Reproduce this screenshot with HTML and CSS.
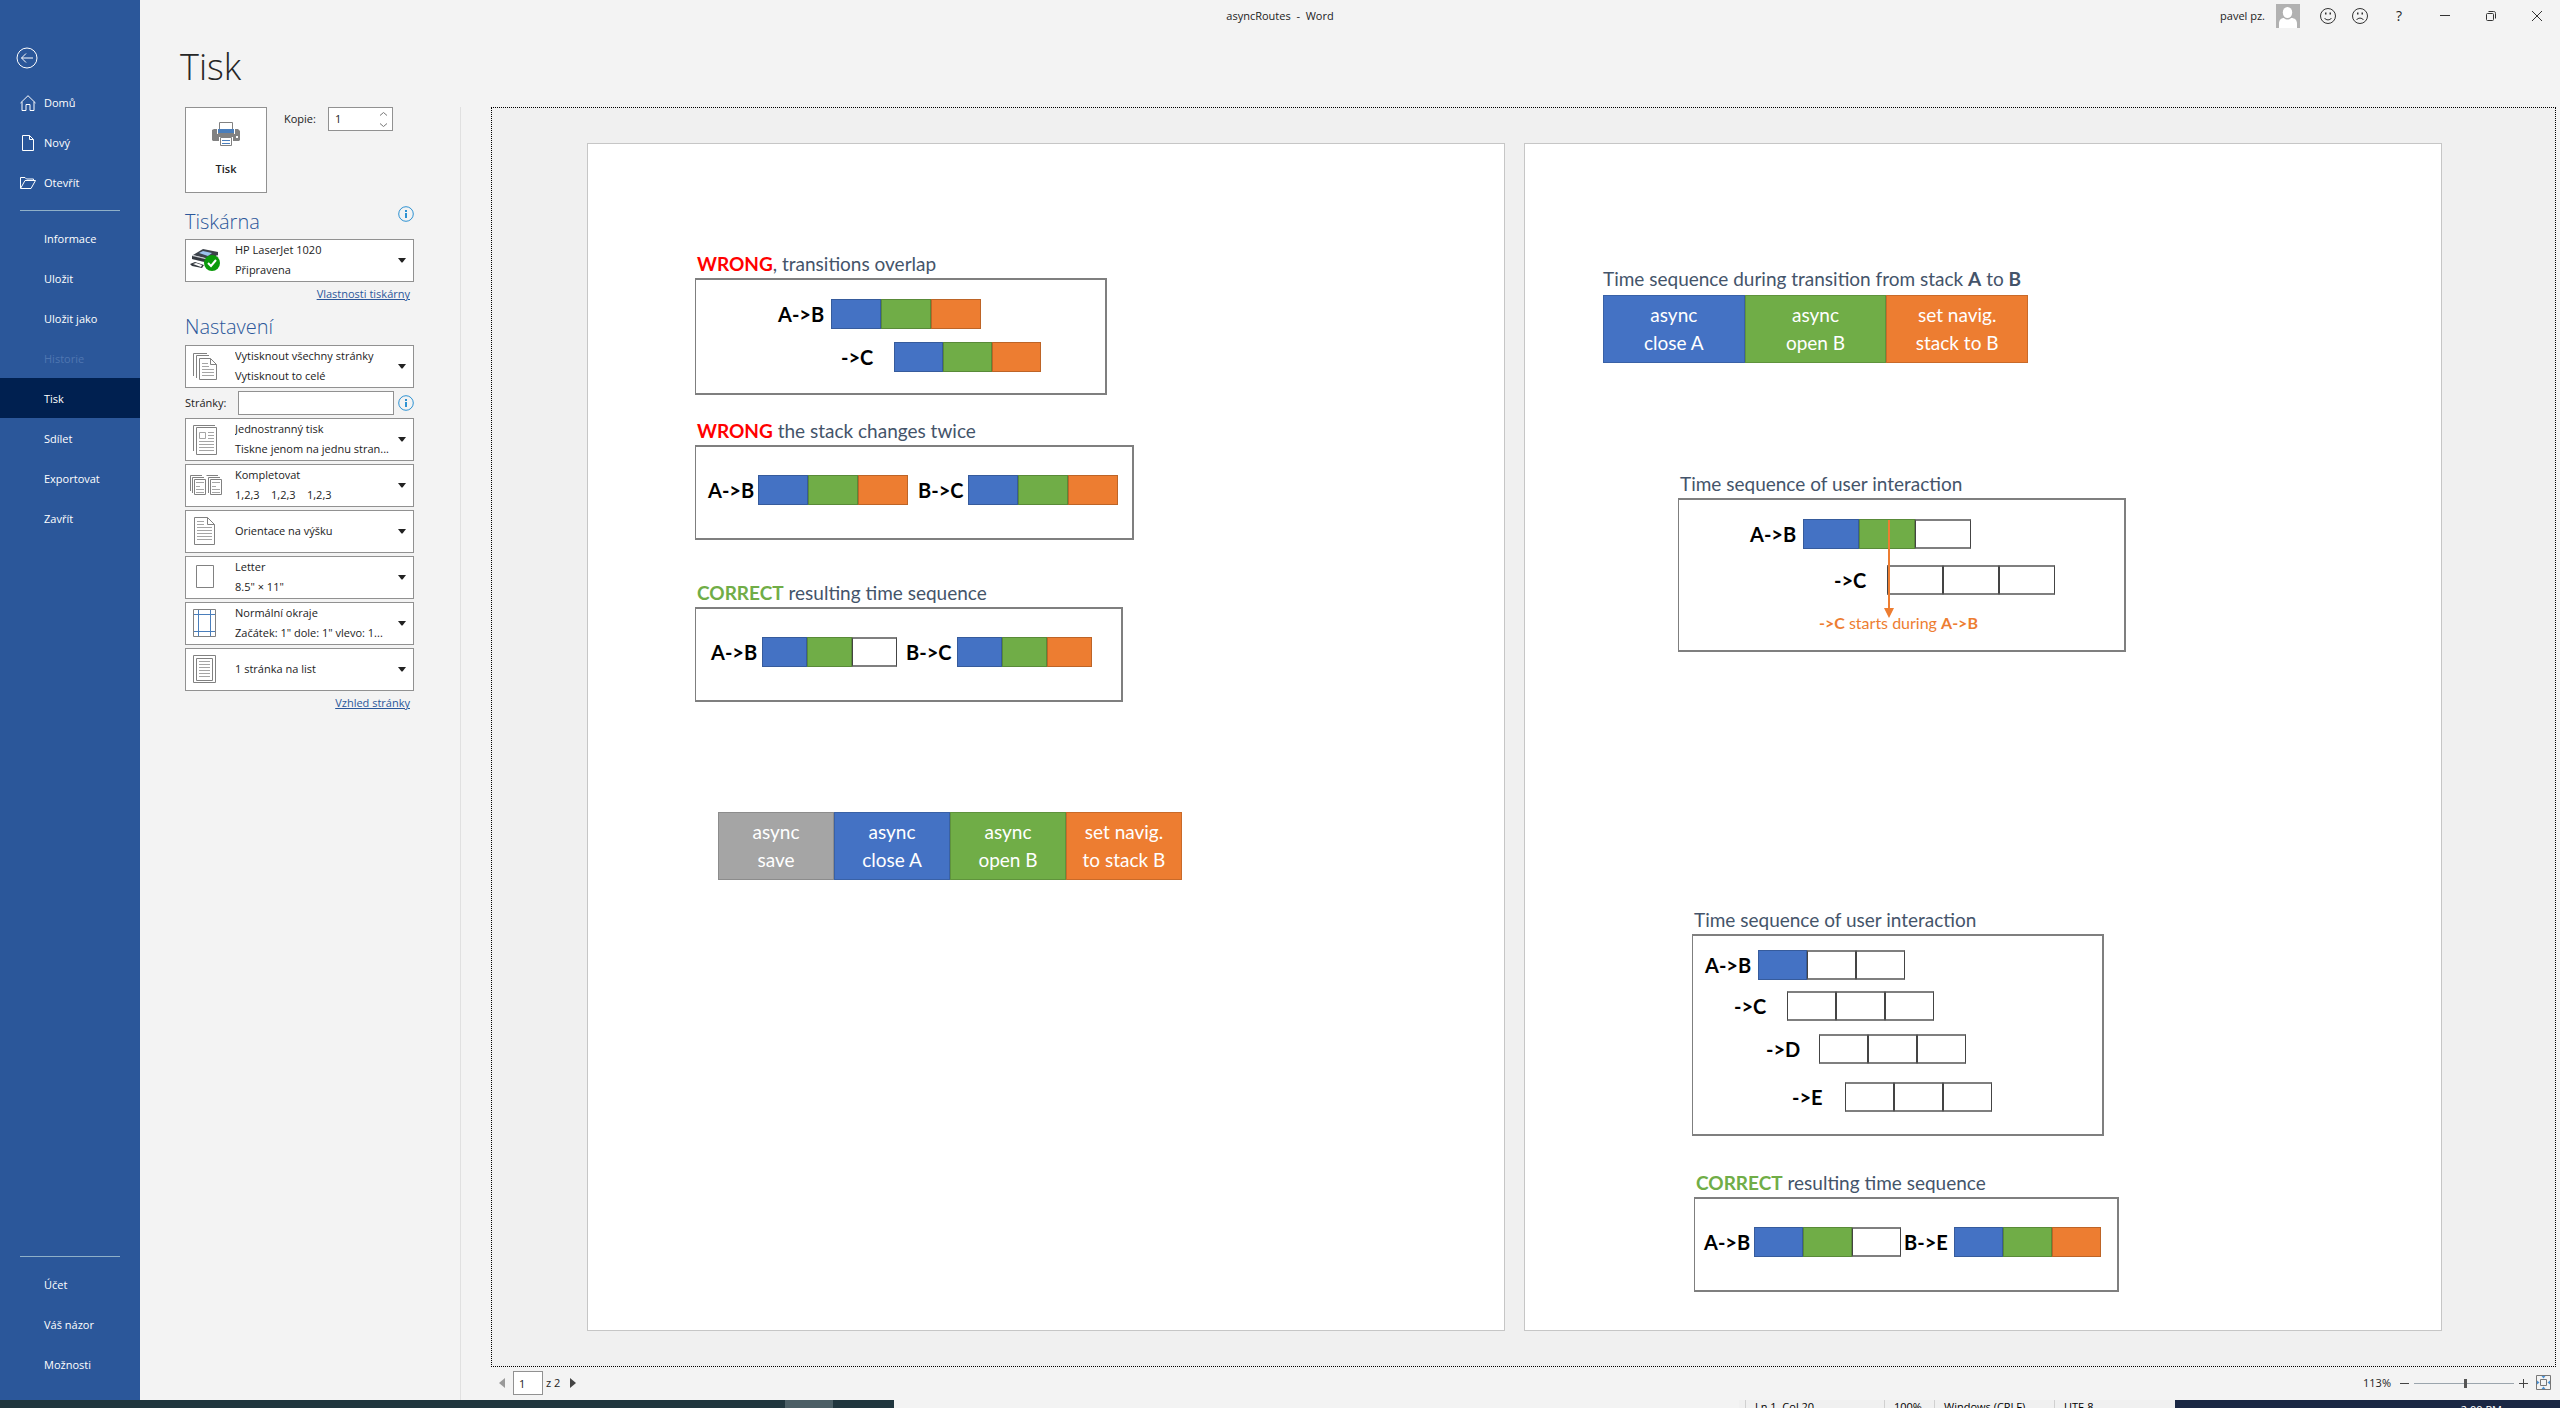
FILE: index.html
```
<!DOCTYPE html>
<html lang="cs">
<head>
<meta charset="utf-8">
<title>asyncRoutes - Word</title>
<link rel="stylesheet" href="styles.css">
</head>
<body>
<div class="app">
  <nav class="sidebar" aria-label="Soubor">
    <button class="back" aria-label="Zpět">
      <svg width="22" height="22" viewBox="0 0 22 22"><circle cx="11" cy="11" r="10"/><path d="M17 11H5.500M10 6.500L5.500 11l4.500 4.500"/></svg>
    </button>
    <a class="nav-item" href="#"><svg width="16" height="16" viewBox="0 0 16 16"><path d="M.5 8L8 .7 15.500 8M2 6.800V15.500h4V9.500h4v6h4V6.800"/></svg>Domů</a>
    <a class="nav-item" href="#"><svg width="16" height="16" viewBox="0 0 16 16"><path d="M2.500.5h7l4 4v11h-11zM9.500.5v4h4"/></svg>Nový</a>
    <a class="nav-item" href="#"><svg width="16" height="16" viewBox="0 0 16 16"><path d="M.5 13V2.500h4.500l1.500 1.500h7v1.500M.5 13.500h10.500l4.500-8H5z"/></svg>Otevřít</a>
    <hr class="nav-line">
    <a class="nav-item" href="#">Informace</a>
    <a class="nav-item" href="#">Uložit</a>
    <a class="nav-item" href="#">Uložit jako</a>
    <a class="nav-item disabled" aria-disabled="true">Historie</a>
    <a class="nav-item current" href="#" aria-current="page">Tisk</a>
    <a class="nav-item" href="#">Sdílet</a>
    <a class="nav-item" href="#">Exportovat</a>
    <a class="nav-item" href="#">Zavřít</a>
    <div class="nav-space"></div>
    <hr class="nav-line">
    <a class="nav-item" href="#">Účet</a>
    <a class="nav-item" href="#">Váš názor</a>
    <a class="nav-item" href="#">Možnosti</a>
  </nav>

  <div class="main">
    <header class="titlebar">
      <div class="doc-title">asyncRoutes&nbsp; -&nbsp; Word</div>
      <div class="account">
        <span>pavel pz.</span>
        <svg class="avatar" width="24" height="24" viewBox="0 0 24 24"><path fill="#b1b1b1" d="M0 0h24v24H0z"/><ellipse cx="11.500" cy="8.500" rx="4.700" ry="5.500" fill="#fff"/><path fill="#fff" d="M3 24v-4c0-4 2-6 5-6 2 2 5 2 7 0 4 0 6 2 6 6v4z"/></svg>
      </div>
      <button class="tool" aria-label="Líbí se mi"><svg width="18" height="18" viewBox="0 0 18 18"><circle cx="9" cy="9" r="7.500"/><path d="M5.500 11c1.500 2.500 5.500 2.500 7 0"/><path class="eye" d="M6 5.500h1.500v2H6zM10.500 5.500H12v2h-1.500z"/></svg></button>
      <button class="tool" aria-label="Nelíbí se mi"><svg width="18" height="18" viewBox="0 0 18 18"><circle cx="9" cy="9" r="7.500"/><path d="M5.500 13c1.500-2.500 5.500-2.500 7 0"/><path class="eye" d="M6 5.500h1.500v2H6zM10.500 5.500H12v2h-1.500z"/></svg></button>
      <button class="tool wide" aria-label="Nápověda">?</button>
      <button class="tool window" aria-label="Minimalizovat"><svg width="12" height="12" viewBox="0 0 12 12"><path d="M1 5.500h10"/></svg></button>
      <button class="tool window" aria-label="Obnovit"><svg width="12" height="12" viewBox="0 0 12 12"><rect x="1.500" y="3.500" width="7" height="7" rx="1"/><path d="M3.500 1.500h5c1.500 0 2 .5 2 2v5"/></svg></button>
      <button class="tool window" aria-label="Zavřít"><svg width="12" height="12" viewBox="0 0 12 12"><path d="M1 1l10 10M11 1L1 11"/></svg></button>
    </header>

    <h1>Tisk</h1>

    <div class="workspace">
      <section class="settings">
        <div class="print-row">
          <button class="print-button">
            <svg width="28" height="26" viewBox="0 0 28 26"><path fill="#818181" d="M2 8h24l2 2v9l-1 1H1l-1-1V9z"/><path fill="#fff" stroke="#818181" d="M7.500 1.500h13v8h-13z"/><path fill="#fff" d="M5 8h1v5h16V8h1v5H5z"/><path fill="#4a7ebb" d="M6 8h16v4H6z"/><path fill="#fff" d="M8 2h12v6H8z"/><path fill="#fff" d="M24 15h2v2h-2zM7 16h14v4H7z"/><path fill="#fff" stroke="#818181" d="M8.500 16.500h11v8h-11z"/><path stroke="#4a7ebb" d="M10 19.500h8M10 22.500h8"/></svg>
            Tisk
          </button>
          <label for="copies">Kopie:</label>
          <div class="spin">
            <input id="copies" type="text" inputmode="numeric" value="1">
            <svg width="9" height="17" viewBox="0 0 9 17"><path d="M1 4.500l3.500-3 3.500 3M1 12.500l3.500 3 3.500-3"/></svg>
          </div>
        </div>

        <div class="heading-row">
          <h2>Tiskárna</h2>
          <button class="info" aria-label="Stav tiskárny"><svg width="16" height="16" viewBox="0 0 16 16"><circle cx="8" cy="8" r="7.300"/><path d="M7 4h2v2H7zM7 7h2v5H7z"/></svg></button>
        </div>
        <label class="combo">
          <svg class="pic" width="32" height="32" viewBox="0 0 32 32"><path fill="#3d434b" d="M4 11l10-6 15 3v3l-9 4z"/><path fill="#9cc3ee" d="M10 9l4-2 9 2-4 3z"/><path fill="#c5c9ce" d="M3 11l17 4 9-4v6l-7 7-6-2 2-3-15-4z"/><path fill="#33383e" d="M3 12l17 4v3L3 15zM1 20l5-2 9 3-2 3-10-2z"/><path fill="#fff" d="M4 20l3-1 6 2-1 2z"/><circle cx="23" cy="19" r="8" fill="#0a9a0a"/><path fill="none" stroke="#fff" stroke-width="2" d="M19 19l3 3 5-6"/></svg>
          <select aria-label="Tiskárna"><option>HP LaserJet 1020</option></select>
          <span class="detail">Připravena</span>
          <svg class="arrow" width="8" height="5" viewBox="0 0 8 5"><path d="M0 0h8L4.500 4.500h-1z"/></svg>
        </label>
        <a class="more" href="#">Vlastnosti tiskárny</a>

        <div class="heading-row settings-title"><h2>Nastavení</h2></div>
        <div class="options">
          <label class="combo">
            <svg class="pic line" width="32" height="32" viewBox="0 0 32 32"><path d="M4.500 26V3.500H18M7.500 28V5.500H20M10.500 8.500h11l6 6v15h-17zM21.500 8.500v6h6"/><path class="text" d="M13 13.500h6M13 16.500h7M13 19.500h12M13 22.500h12M13 25.500h12"/></svg>
            <select aria-label="Rozsah tisku"><option>Vytisknout všechny stránky</option></select>
            <span class="detail">Vytisknout to celé</span>
            <svg class="arrow" width="8" height="5" viewBox="0 0 8 5"><path d="M0 0h8L4.500 4.500h-1z"/></svg>
          </label>
          <div class="pages-row">
            <label for="pages">Stránky:</label>
            <input id="pages" type="text">
            <button class="info" aria-label="Nápověda ke stránkám"><svg width="16" height="16" viewBox="0 0 16 16"><circle cx="8" cy="8" r="7.300"/><path d="M7 4h2v2H7zM7 7h2v5H7z"/></svg></button>
          </div>
          <label class="combo">
            <svg class="pic line" width="32" height="32" viewBox="0 0 32 32"><path d="M4.500 28V2.500H26M7.500 4.500h20v27h-20z"/><path d="M10.500 9.500h6v6h-6z" class="text"/><path class="text" d="M19 9.500h6M19 12.500h6M19 15.500h6M10 18.500h15M10 21.500h15M10 24.500h15M10 27.500h15"/></svg>
            <select aria-label="Strany tisku"><option>Jednostranný tisk</option></select>
            <span class="detail">Tiskne jenom na jednu stran...</span>
            <svg class="arrow" width="8" height="5" viewBox="0 0 8 5"><path d="M0 0h8L4.500 4.500h-1z"/></svg>
          </label>
          <label class="combo">
            <svg class="pic line" width="34" height="32" viewBox="0 0 34 32"><path d="M1.500 22V6.500H13M3.500 24V8.500H15M5.500 10.500h11v15h-11zM17.500 6.500H29M19.500 24V8.500H31M21.500 10.500h11v15h-11z"/><path class="text" d="M7 13.500h8M7 17.500h4M7 20.500h8M7 23.500h8M23 13.500h8M23 17.500h4M23 20.500h8M23 23.500h8"/></svg>
            <select aria-label="Kompletace"><option>Kompletovat</option></select>
            <span class="detail">1,2,3&nbsp; &nbsp; 1,2,3&nbsp; &nbsp; 1,2,3</span>
            <svg class="arrow" width="8" height="5" viewBox="0 0 8 5"><path d="M0 0h8L4.500 4.500h-1z"/></svg>
          </label>
          <label class="combo single">
            <svg class="pic line" width="32" height="32" viewBox="0 0 32 32"><path d="M5.500 2.500h13l7 7v20h-20zM18.500 2.500v7h7"/><path class="text" d="M8 6.500h7M8 9.500h7M8 12.500h15M8 15.500h15M8 18.500h15M8 21.500h15M8 24.500h15"/></svg>
            <select aria-label="Orientace"><option>Orientace na výšku</option></select>
            <svg class="arrow" width="8" height="5" viewBox="0 0 8 5"><path d="M0 0h8L4.500 4.500h-1z"/></svg>
          </label>
          <label class="combo">
            <svg class="pic line" width="32" height="32" viewBox="0 0 32 32"><path d="M7.500 4.500h17v22h-17z"/></svg>
            <select aria-label="Formát papíru"><option>Letter</option></select>
            <span class="detail">8.5" × 11"</span>
            <svg class="arrow" width="8" height="5" viewBox="0 0 8 5"><path d="M0 0h8L4.500 4.500h-1z"/></svg>
          </label>
          <label class="combo">
            <svg class="pic line" width="32" height="32" viewBox="0 0 32 32"><path d="M4.500 2.500h22v27h-22z"/><path class="guide" d="M9.500 3v26M21.500 3v26M5 7.500h21M5 24.500h21"/></svg>
            <select aria-label="Okraje"><option>Normální okraje</option></select>
            <span class="detail">Začátek: 1" dole: 1" vlevo: 1...</span>
            <svg class="arrow" width="8" height="5" viewBox="0 0 8 5"><path d="M0 0h8L4.500 4.500h-1z"/></svg>
          </label>
          <label class="combo single">
            <svg class="pic line" width="32" height="32" viewBox="0 0 32 32"><path d="M4.500 2.500h22v27h-22zM7.500 5.500h16v22h-16z"/><path class="text" d="M10 8.500h11M10 11.500h11M10 14.500h11M10 17.500h11M10 20.500h11M10 23.500h11"/></svg>
            <select aria-label="Stránek na list"><option>1 stránka na list</option></select>
            <svg class="arrow" width="8" height="5" viewBox="0 0 8 5"><path d="M0 0h8L4.500 4.500h-1z"/></svg>
          </label>
        </div>
        <a class="more" href="#">Vzhled stránky</a>
      </section>

      <section class="preview-pane">
        <div class="preview">
          <article class="page page-one">
            <figure class="fig overlap">
              <figcaption><b class="wrong">WRONG</b>, transitions overlap</figcaption>
              <div class="frame stack">
                <div class="track t1"><b>A-&gt;B</b><i class="blue"></i><i class="green"></i><i class="orange"></i></div>
                <div class="track t2"><b>-&gt;C</b><i class="blue"></i><i class="green"></i><i class="orange"></i></div>
              </div>
            </figure>
            <figure class="fig twice">
              <figcaption><b class="wrong">WRONG</b> the stack changes twice</figcaption>
              <div class="frame line">
                <div class="track"><b>A-&gt;B</b><i class="blue"></i><i class="green"></i><i class="orange"></i></div>
                <div class="track"><b>B-&gt;C</b><i class="blue"></i><i class="green"></i><i class="orange"></i></div>
              </div>
            </figure>
            <figure class="fig resulting">
              <figcaption><b class="correct">CORRECT</b> resulting time sequence</figcaption>
              <div class="frame line">
                <div class="track"><b>A-&gt;B</b><i class="blue"></i><i class="green"></i><i class="empty"></i></div>
                <div class="track"><b>B-&gt;C</b><i class="blue"></i><i class="green"></i><i class="orange"></i></div>
              </div>
            </figure>
            <div class="steps four">
              <div class="gray">async<br>save</div><div class="blue">async<br>close A</div><div class="green">async<br>open B</div><div class="orange">set navig.<br>to stack B</div>
            </div>
          </article>

          <article class="page page-two">
            <figure class="fig sequence">
              <figcaption>Time sequence during transition from stack <b>A</b> to <b>B</b></figcaption>
              <div class="steps three">
                <div class="blue">async<br>close A</div><div class="green">async<br>open B</div><div class="orange">set navig.<br>stack to B</div>
              </div>
            </figure>
            <figure class="fig interaction">
              <figcaption>Time sequence of user interaction</figcaption>
              <div class="frame stack">
                <div class="track t1"><b>A-&gt;B</b><i class="blue"></i><i class="green"></i><i class="empty"></i></div>
                <div class="track t2"><b>-&gt;C</b><i class="empty"></i><i class="empty"></i><i class="empty"></i></div>
                <p class="note"><b>-&gt;C</b> starts during <b>A-&gt;B</b></p>
                <svg class="marker" width="10" height="98" viewBox="0 0 10 98"><path d="M4 0h2v88h4L5 98 0 88h4z"/></svg>
              </div>
            </figure>
            <figure class="fig cascade">
              <figcaption>Time sequence of user interaction</figcaption>
              <div class="frame stack">
                <div class="track t1"><b>A-&gt;B</b><i class="blue"></i><i class="empty"></i><i class="empty"></i></div>
                <div class="track t2"><b>-&gt;C</b><i class="empty"></i><i class="empty"></i><i class="empty"></i></div>
                <div class="track t3"><b>-&gt;D</b><i class="empty"></i><i class="empty"></i><i class="empty"></i></div>
                <div class="track t4"><b>-&gt;E</b><i class="empty"></i><i class="empty"></i><i class="empty"></i></div>
              </div>
            </figure>
            <figure class="fig final">
              <figcaption><b class="correct">CORRECT</b> resulting time sequence</figcaption>
              <div class="frame line">
                <div class="track"><b>A-&gt;B</b><i class="blue"></i><i class="green"></i><i class="empty"></i></div>
                <div class="track"><b>B-&gt;E</b><i class="blue"></i><i class="green"></i><i class="orange"></i></div>
              </div>
            </figure>
          </article>
        </div>

        <footer class="preview-bar">
          <button class="step" aria-label="Předchozí stránka" disabled><svg width="6" height="10" viewBox="0 0 6 10"><path d="M6 0v10L0 5z"/></svg></button>
          <input type="text" value="1" aria-label="Aktuální stránka">
          <span>z 2</span>
          <button class="step" aria-label="Další stránka"><svg width="6" height="10" viewBox="0 0 6 10"><path d="M0 0v10l6-5z"/></svg></button>
          <div class="zoom">
            <span class="percent">113%</span>
            <button aria-label="Oddálit"><svg width="9" height="9" viewBox="0 0 9 9"><path d="M0 4.500h9"/></svg></button>
            <input type="range" min="0" max="100" value="52" aria-label="Lupa">
            <button aria-label="Přiblížit"><svg width="9" height="9" viewBox="0 0 9 9"><path d="M0 4.500h9M4.500 0v9"/></svg></button>
            <button class="fit" aria-label="Přizpůsobit stránce"><svg width="16" height="16" viewBox="0 0 16 16"><path d="M.5.5h14v14H.5zM4.500 4.500h6v6h-6z"/><path class="tri" d="M5.500 1h4l-2 2.500zM5.500 14h4l-2-2.500zM1 5.500v4l2.500-2zM14 5.500v4l-2.500-2z"/></svg></button>
          </div>
        </footer>
      </section>
    </div>
  </div>
</div>
<div class="desktop">
  <div class="taskbar"><span class="task"></span></div>
  <div class="notepad"><span>Ln 1, Col 20</span><span>100%</span><span>Windows (CRLF)</span><span>UTF-8</span></div>
  <div class="clock">2:00 PM</div>
</div>
</body>
</html>
```

FILE: styles.css
```
* { box-sizing: border-box; }
body {
  margin: 0;
  height: 100vh;
  display: flex;
  flex-direction: column;
  overflow: hidden;
  background: #f3f3f3;
  color: #222;
  font: 11px/20px "Open Sans", "Noto Sans", sans-serif;
}
button, input, select { font: inherit; color: inherit; margin: 0; padding: 0; border: 0; background: none; border-radius: 0; }
button { display: inline-flex; align-items: center; justify-content: center; }
svg { display: block; flex: none; }
h1, h2, figure, p { margin: 0; }
h1, h2 { font-weight: 300; }

.app { flex: 1; min-height: 0; display: flex; }

/* navigation */
.sidebar { flex: none; width: 140px; padding: 36px 0 16px; display: flex; flex-direction: column; background: #2b579a; color: #fff; }
.sidebar svg { fill: none; stroke: #fff; }
.back { width: 22px; margin: 11px 0 13px 16px; height: 22px; }
.nav-item { flex: none; height: 40px; padding: 1px 0 0 44px; display: flex; align-items: center; color: #fff; text-decoration: none; }
.nav-item svg { width: 16px; margin-left: -24px; margin-right: 8px; }
.nav-item.disabled { color: #4f76b1; }
.nav-item.current { background: #002050; }
.nav-line { width: 100px; height: 1px; margin: 8px 0 7px 20px; border: 0; background: #8fb0c8; flex: none; }
.nav-space { flex: 1; }

/* title bar */
.main { flex: 1; min-width: 0; display: flex; flex-direction: column; }
.titlebar { flex: none; height: 31px; display: flex; align-items: center; justify-content: flex-end; position: relative; }
.doc-title { position: absolute; left: 0; right: 140px; text-align: center; }
.account { display: flex; align-items: center; gap: 11px; margin-right: 12px; }
.tool { width: 32px; height: 30px; }
.tool svg { fill: none; stroke: #333; }
.tool .eye { fill: #333; stroke: none; }
.tool.wide { width: 46px; font-size: 14px; }
.tool.window { width: 46px; }
h1 { font-size: 36px; line-height: 48px; padding: 12px 0 16px 40px; color: #262626; }

/* print settings */
.workspace { flex: 1; min-height: 0; display: flex; }
.settings { flex: none; width: 321px; padding: 0 46px 0 45px; border-right: 1px solid #e0e0e0; }
.print-row { display: flex; align-items: flex-start; height: 86px; }
.print-button { width: 82px; height: 86px; flex-direction: column; gap: 12px; border: 1px solid #919191; background: #fff; font-weight: 600; }
.print-row label { width: 61px; padding-left: 17px; line-height: 24px; }
.spin { width: 65px; height: 24px; display: flex; align-items: center; padding: 0 4px 0 6px; border: 1px solid #919191; background: #fff; }
.spin input { flex: 1; min-width: 0; }
.spin svg { fill: none; stroke: #777; }
.heading-row { display: flex; justify-content: space-between; height: 46px; padding: 12px 0 0; }
.heading-row h2 { font-size: 20px; line-height: 34px; color: #2b579a; }
.info { width: 16px; height: 16px; }
.heading-row .info { margin-top: 1px; }
.info svg { fill: none; stroke: #2e92d2; }
.info path { fill: #2e92d2; stroke: none; }
.combo { display: grid; grid-template-columns: 49px minmax(0, 1fr) 15px; grid-template-rows: 20px 20px; height: 43px; border: 1px solid #919191; background: #fff; align-items: center; }
.combo .pic { grid-row: 1 / 3; grid-column: 1; margin-left: 3px; }
.combo .arrow { grid-row: 1 / 3; grid-column: 3; fill: #222; }
.combo select { grid-column: 2; appearance: none; height: 20px; outline: 0; width: 100%; }
.combo .detail { grid-column: 2; grid-row: 2; white-space: nowrap; }
.combo.single select { grid-row: 1 / 3; }
.pic.line { fill: none; stroke: #818181; }
.pic.line .text { stroke: #a5a5a5; }
.pic.line .guide { stroke: #4a7ebb; }
.more { display: block; text-align: right; padding: 2px 4px 0 0; color: #2b579a; line-height: 20px; }
.settings-title { height: 41px; padding-top: 6px; }
.options { display: flex; flex-direction: column; gap: 3px; }
.pages-row { display: flex; align-items: center; }
.pages-row label { width: 53px; }
.pages-row input { flex: 1; min-width: 0; height: 24px; padding: 0 6px; border: 1px solid #919191; background: #fff; margin-right: 4px; }

/* preview */
.preview-pane { flex: 1; min-width: 0; display: flex; flex-direction: column; padding: 0 4px 0 30px; }
.preview { flex: 1; min-height: 0; display: flex; justify-content: center; gap: 19px; padding: 35px 18px 35px 0; border: 1px dotted #000; background: #f0f0f0; overflow: hidden; }
.page { flex: none; height: 100%; aspect-ratio: 17 / 22; border: 1px solid #c6c6c6; background: #fff; display: flex; flex-direction: column; align-items: flex-start; color: #44546a; font-family: Lato, "Open Sans", sans-serif; }

.fig figcaption { height: 26px; padding-left: 2px; font-size: 19px; line-height: 24px; white-space: nowrap; }
.wrong { color: #f00; }
.correct { color: #70ad47; }
.frame { border: 2px solid #7f7f7f; border-left-width: 1px; color: #000; }
.frame.stack { position: relative; }
.frame.line { display: flex; height: 95px; padding-top: 28px; }
.track { display: flex; height: 30px; }
.track b { width: 53px; font-size: 20px; line-height: 30px; white-space: nowrap; }
.line .track b { width: 50px; }
.track i { width: 50px; border: 1px solid rgba(0, 0, 0, .2); }
.track .empty { border: 2px solid #7f7f7f; border-width: 2px 1px; border-left-color: #444; border-right-color: #444; }
.blue { background: #4472c4; }
.green { background: #70ad47; }
.orange { background: #ed7d31; }
.gray { background: #a5a5a5; }
.steps { display: flex; height: 68px; color: #fff; font-size: 19px; line-height: 28px; text-align: center; }
.steps div { flex: 1; padding-top: 5px; border: 1px solid rgba(0, 0, 0, .15); }

.page-one { padding-left: 107px; }
.overlap { width: 412px; margin-top: 108px; }
.overlap .frame { height: 117px; padding-top: 19px; }
.overlap .t1 { margin-left: 82px; }
.overlap .t2 { margin: 13px 0 0 145px; }
.overlap .t2 i { width: 49px; }
.twice { width: 439px; margin-top: 24px; }
.twice .frame { padding-left: 12px; gap: 10px; }
.resulting { width: 428px; margin-top: 41px; }
.resulting .frame { padding-left: 15px; gap: 9px; }
.resulting .track b { width: 51px; }
.resulting i { width: 45px; }
.four { width: 464px; margin: 110px 0 0 23px; }

.sequence { width: 425px; margin: 119px 0 0 78px; }
.sequence figcaption { height: 32px; padding: 4px 0 0; }
.interaction { width: 448px; margin: 109px 0 0 153px; }
.interaction .frame { height: 154px; padding-top: 19px; }
.interaction .t1 { margin-left: 71px; }
.interaction .t2 { margin: 16px 0 0 155px; }
.interaction i { width: 56px; }
.note { font-size: 16px; line-height: 20px; margin: 18px 0 0 140px; color: #ed7d31; white-space: nowrap; }
.marker { position: absolute; left: 205px; top: 20px; fill: #ed7d31; }
.cascade { width: 412px; margin: 256px 0 0 167px; }
.cascade i, .final i { width: 49px; }
.cascade .frame { height: 202px; padding-top: 14px; }
.cascade .t1 { margin-left: 12px; }
.cascade .t2 { margin: 11px 0 0 41px; }
.cascade .t3 { margin: 13px 0 0 73px; }
.cascade .t4 { margin: 18px 0 0 99px; }
.final { width: 425px; margin: 35px 0 0 169px; }
.final .frame { padding-left: 9px; gap: 3px; }

.preview-bar { flex: none; height: 33px; display: flex; align-items: center; padding: 0 4px 1px 8px; }
.step svg { fill: #444; }
.step:disabled svg { fill: #999; }
.preview-bar > input { width: 30px; height: 24px; margin: 0 3px 0 8px; padding-left: 5px; border: 1px solid #919191; background: #fff; }
.preview-bar > span { width: 24px; }
.zoom { margin-left: auto; display: flex; align-items: center; }
.zoom svg { fill: none; stroke: #444; }
.percent { margin-right: 9px; }
.zoom input { appearance: none; width: 100px; height: 16px; margin: 0 5px; background: linear-gradient(#9ba5ad, #9ba5ad) center / 100% 1px no-repeat; }
.zoom input::-webkit-slider-thumb { appearance: none; width: 3px; height: 9px; background: #555; }
.zoom .fit { margin-left: 8px; }
.zoom .fit svg { stroke: #777; }
.zoom .fit .tri { fill: #4a90d2; stroke: none; }

/* strip of the desktop below the window */
.desktop { flex: none; height: 8px; display: grid; grid-template-columns: 894fr 1281fr 385fr; overflow: hidden; background: #f3f3f3; }
.taskbar { background: #20363e; display: flex; justify-content: flex-end; }
.task { width: 48px; margin-right: 61px; background: #4c5f66; }
.notepad { display: flex; justify-content: flex-end; background: linear-gradient(90deg, #f3f3f3 66%, #f0f0f0 66%); color: #000; line-height: 14px; white-space: nowrap; }
.notepad span { flex: none; border-left: 1px solid #d0d0d0; padding-left: 9px; height: 20px; width: 121px; }
.notepad span:first-child { width: 139px; }
.notepad span:nth-child(2) { width: 50px; }
.notepad span:nth-child(3) { width: 120px; }
.clock { padding-right: 58px; text-align: right; background: #1a2744; color: #fff; }
```
